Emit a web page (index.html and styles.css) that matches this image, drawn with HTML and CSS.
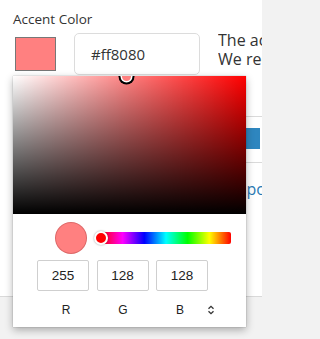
FILE: index.html
```html
<!DOCTYPE html>
<html>
<head>
<meta charset="utf-8">
<link rel="stylesheet" href="styles.css">
</head>
<body>
<div class="screen">
  <div class="page">
    <div class="label">Accent Color</div>
    <div class="row">
      <div class="swatch"></div>
      <div class="hex">#ff8080</div>
      <div class="desc">
        <p class="help">The accent color is used for links.<br>We recommend a darker shade.</p>
        <div class="rule rule-top"></div>
        <div class="btn"></div>
        <div class="rule rule-mid"></div>
        <a class="link">Support</a>
      </div>
    </div>
  </div>

  <div class="picker">
    <div class="sat">
      <div class="sat-white"></div>
      <div class="sat-black"></div>
      <div class="sat-pointer"></div>
    </div>
    <div class="controls">
      <div class="hue-row">
        <div class="preview"></div>
        <div class="hue">
          <div class="hue-thumb"></div>
        </div>
      </div>
      <div class="inputs">
        <input class="num" value="255" readonly>
        <input class="num" value="128" readonly>
        <input class="num" value="128" readonly>
      </div>
      <div class="labels">
        <span class="lbl">R</span>
        <span class="lbl">G</span>
        <span class="lbl">B</span>
        <span class="toggle">
          <svg width="8" height="10" viewBox="0 0 8 10"><path d="M1.5 3.8 L4 1.3 L6.5 3.8 M1.5 6.2 L4 8.7 L6.5 6.2" fill="none" stroke="#333" stroke-width="1.3"/></svg>
        </span>
      </div>
    </div>
  </div>
</div>
</body>
</html>
```

FILE: styles.css
```css
html, body {
  margin: 0;
  padding: 0;
}
body {
  background: #f2f2f2;
  font-family: "Open Sans", "Liberation Sans", sans-serif;
  color: #333;
}
.screen {
  position: relative;
  width: 262px;
  height: 339px;
  overflow: hidden;
}
.page {
  height: 297px;
  box-sizing: border-box;
  padding: 10px 0 0 13px;
  background: #fff;
  border-bottom: 1px solid #d9d9d9;
}
.label {
  font-size: 13.5px;
  line-height: 18px;
  color: #333;
}
.row {
  display: flex;
  align-items: flex-start;
  margin-top: 5px;
  overflow: hidden;
}
.swatch {
  flex: none;
  width: 41px;
  height: 34px;
  box-sizing: border-box;
  margin: 4px 0 0 2px;
  background: #ff8080;
  border: 1px solid #777;
}
.hex {
  flex: none;
  width: 126px;
  height: 42px;
  box-sizing: border-box;
  margin-left: 18px;
  padding-left: 16px;
  border: 1px solid #dcdcdc;
  border-radius: 5px;
  font-size: 15px;
  line-height: 40px;
  color: #333;
}
.desc {
  flex: 1 1 auto;
  min-width: 0;
  overflow: hidden;
  margin: -2px 0 0 18px;
}
.help {
  margin: 0;
  font-size: 16px;
  line-height: 19px;
  color: #333;
  white-space: nowrap;
  overflow: hidden;
}
.rule {
  height: 1px;
  background: #dadada;
}
.rule-top {
  margin-top: 47px;
}
.btn {
  width: 42px;
  height: 21px;
  margin-top: 11px;
  background: #2e86bf;
}
.rule-mid {
  margin-top: 13px;
}
.link {
  display: block;
  margin-top: 16px;
  font-size: 16px;
  line-height: 20px;
  color: #2a7ab5;
  white-space: nowrap;
  overflow: hidden;
}

/* colour picker popover */
.picker {
  position: absolute;
  left: 13px;
  top: 76px;
  width: 233px;
  height: 251px;
  background: #fff;
  box-shadow: 0 0 1px rgba(0, 0, 0, 0.35), 0 3px 8px rgba(0, 0, 0, 0.3);
}
.sat {
  position: relative;
  height: 138px;
  overflow: hidden;
  background: #f00;
}
.sat-white,
.sat-black {
  position: absolute;
  inset: 0;
}
.sat-white {
  background: linear-gradient(to right, #fff, rgba(255, 255, 255, 0));
}
.sat-black {
  background: linear-gradient(to top, #000, rgba(0, 0, 0, 0));
}
.sat-pointer {
  position: absolute;
  left: 109px;
  top: -4px;
  width: 9px;
  height: 9px;
  border-radius: 50%;
  background: #ff8080;
  box-shadow: 0 0 0 1.5px #fff, 0 0 0 3.5px #000;
}
.controls {
  padding-top: 8px;
}
.hue-row {
  display: flex;
  align-items: center;
  gap: 14px;
  padding-left: 42px;
  height: 32px;
}
.preview {
  flex: none;
  width: 32px;
  height: 32px;
  box-sizing: border-box;
  border-radius: 50%;
  background: #ff8080;
  border: 1px solid rgba(160, 60, 60, 0.35);
}
.hue {
  position: relative;
  width: 130px;
  height: 12px;
  border-radius: 2px;
  background: linear-gradient(to right, #f00 0%, #f0f 16.66%, #00f 33.33%, #0ff 50%, #0f0 66.66%, #ff0 83.33%, #f00 100%);
}
.hue-thumb {
  position: absolute;
  left: -7px;
  top: -1px;
  width: 14px;
  height: 14px;
  box-sizing: border-box;
  border-radius: 50%;
  background: #f00;
  border: 2px solid #fff;
  box-shadow: 0 0 2px rgba(0, 0, 0, 0.4);
}
.inputs {
  display: flex;
  gap: 7.5px;
  padding-left: 24px;
  margin-top: 6px;
}
.num {
  width: 52px;
  height: 31px;
  box-sizing: border-box;
  margin: 0;
  padding: 0;
  border: 1px solid #cfcfcf;
  border-radius: 2px;
  text-align: center;
  font-family: "Liberation Sans", Arial, sans-serif;
  font-size: 13.5px;
  color: #222;
  outline: none;
}
.labels {
  display: flex;
  align-items: center;
  padding-left: 24.5px;
  margin-top: 12px;
  height: 14px;
}
.lbl {
  width: 57px;
  text-align: center;
  font-family: "Liberation Sans", Arial, sans-serif;
  font-size: 12px;
  line-height: 14px;
  color: #222;
}
.toggle {
  display: flex;
  margin-left: -1.5px;
}
```
